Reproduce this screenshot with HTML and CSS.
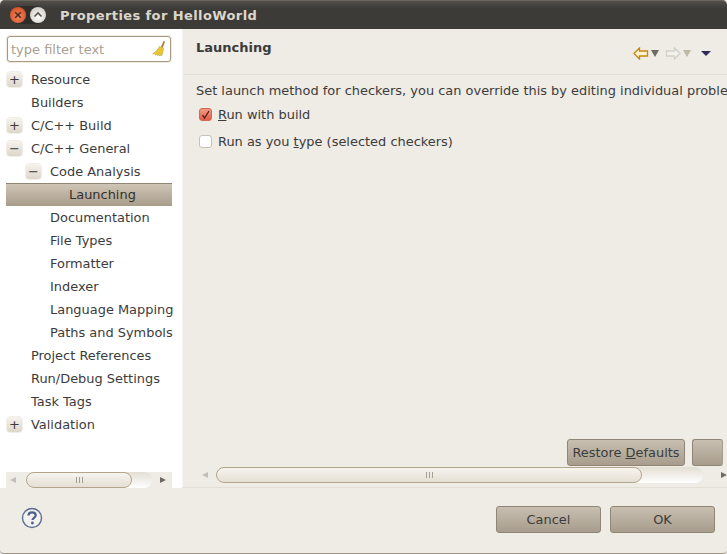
FILE: index.html
```html
<!DOCTYPE html>
<html lang="en">
<head>
<meta charset="utf-8">
<title>Properties for HelloWorld</title>
<link rel="stylesheet" href="styles.css">
</head>
<body>
<div class="window">
  <header class="titlebar">
    <div class="wm-group">
      <span class="wm wm-close"><svg width="16" height="16" viewBox="0 0 16 16"><path d="M5.200 5.200l5.600 5.600M10.800 5.200l-5.600 5.600" stroke="#4a2a20" stroke-width="1.600" fill="none"/></svg></span>
      <span class="wm wm-max"><svg width="16" height="16" viewBox="0 0 16 16"><path d="M4.500 9.500L8 6l3.500 3.500" stroke="#55514a" stroke-width="1.600" fill="none"/></svg></span>
    </div>
    <span class="title">Properties for HelloWorld</span>
  </header>
  <main class="main">
    <aside class="sidebar">
      <div class="filter">
        <span class="filter-text">type filter text</span>
        <svg class="broom" width="15" height="17" viewBox="0 0 15 17"><path d="M10 7l2.600-6 1.400.7-2.400 6.200z" fill="#a9762f"/><path d="M8.500 6.500l4 2-.5 2.500-1 4.500-1.500-.5-.5 1-1.500-1-.7.6-1.300-1-.8.4L3 13.600 1.500 14C4.500 12 7 9.500 8.500 6.500z" fill="#e8c832" stroke="#b8962a" stroke-width=".5"/></svg>
      </div>
      <ul class="tree">
        <li class="row"><span class="toggle">+</span><span>Resource</span></li>
        <li class="row"><span class="toggle none"></span><span>Builders</span></li>
        <li class="row"><span class="toggle">+</span><span>C/C++ Build</span></li>
        <li class="row"><span class="toggle">−</span><span>C/C++ General</span></li>
        <li class="row lvl1"><span class="toggle">−</span><span>Code Analysis</span></li>
        <li class="row lvl2 selected"><span class="toggle none"></span><span>Launching</span></li>
        <li class="row lvl1"><span class="toggle none"></span><span>Documentation</span></li>
        <li class="row lvl1"><span class="toggle none"></span><span>File Types</span></li>
        <li class="row lvl1"><span class="toggle none"></span><span>Formatter</span></li>
        <li class="row lvl1"><span class="toggle none"></span><span>Indexer</span></li>
        <li class="row lvl1"><span class="toggle none"></span><span>Language Mapping</span></li>
        <li class="row lvl1"><span class="toggle none"></span><span>Paths and Symbols</span></li>
        <li class="row"><span class="toggle none"></span><span>Project References</span></li>
        <li class="row"><span class="toggle none"></span><span>Run/Debug Settings</span></li>
        <li class="row"><span class="toggle none"></span><span>Task Tags</span></li>
        <li class="row"><span class="toggle">+</span><span>Validation</span></li>
      </ul>
      <div class="hscroll side-scroll">
        <span class="arrow arrow-left"></span>
        <div class="trough side-trough"><div class="thumb side-thumb"><span class="grip"></span></div></div>
        <span class="arrow arrow-right"></span>
      </div>
    </aside>
    <section class="content">
      <div class="page-head">
        <h1 class="page-title">Launching</h1>
        <div class="nav">
          <svg width="16" height="13" viewBox="0 0 16 13"><path d="M1 6.500L6.500 1v3h8v5h-8v3z" fill="#fdf3d0" stroke="#c8860e" stroke-width="1.300"/></svg>
          <span class="tri tri-grey"></span>
          <svg class="nav-fwd" width="16" height="13" viewBox="0 0 16 13"><path d="M15 6.500L9.500 1v3h-8v5h8v3z" fill="#f4f1ec" stroke="#d2cfc8" stroke-width="1.300"/></svg>
          <span class="tri tri-tan"></span>
          <span class="tri tri-navy"></span>
        </div>
      </div>
      <div class="page-body">
        <p class="desc">Set launch method for checkers, you can override this by editing individual problem settings</p>
        <label class="check check-first"><span class="box on"><svg width="13" height="13" viewBox="0 0 13 13"><path d="M3.500 7l2 3L10 3" stroke="#4a2018" stroke-width="1.300" fill="none"/></svg></span><span><u>R</u>un with build</span></label>
        <label class="check"><span class="box"></span><span>Run as you <u>t</u>ype (selected checkers)</span></label>
        <div class="page-actions">
          <button class="btn restore">Restore <u>D</u>efaults</button>
          <button class="btn apply"></button>
        </div>
      </div>
      <div class="hscroll main-scroll">
        <span class="arrow arrow-left"></span>
        <div class="trough main-trough"><div class="thumb main-thumb"><span class="grip"></span></div></div>
        <span class="arrow arrow-right"></span>
      </div>
    </section>
  </main>
  <footer class="footer">
    <svg class="help" width="22" height="22" viewBox="0 0 22 22"><circle cx="11" cy="11" r="9.500" fill="#f3f2f0" stroke="#5a6f94" stroke-width="1.400"/><path d="M7.500 8.500C7.500 6.300 9 5.300 11 5.300s3.700 1 3.700 3c0 2.500-3.200 2.500-3.200 4.700" fill="none" stroke="#4d628a" stroke-width="2.200"/><circle cx="11.400" cy="16" r="1.400" fill="#4d628a"/></svg>
    <div class="footer-actions">
      <button class="btn wide">Cancel</button>
      <button class="btn wide">OK</button>
    </div>
  </footer>
</div>
</body>
</html>
```
FILE: styles.css
```css
* { box-sizing: border-box; }
html, body { margin: 0; padding: 0; height: 100%; }
body {
  background: #efebe5;
  font-family: "DejaVu Sans", sans-serif;
  font-size: 12.95px;
  color: #3c3c3c;
  overflow: hidden;
}
.window {
  width: 727px;
  height: 554px;
  display: flex;
  flex-direction: column;
  overflow: hidden;
  background: #efebe5;
  border-bottom: 1px solid #9d9587;
  border-radius: 0 0 4px 4px;
}
.titlebar {
  height: 29px;
  flex: none;
  display: flex;
  align-items: center;
  gap: 14px;
  padding: 0 0 0 10px;
  background: linear-gradient(#55514b, #3c3b37 30%, #3c3b37);
  border-radius: 5px 5px 0 0;
  box-shadow: inset 0 1px 0 #6b6760;
}
.wm-group {
  display: flex;
  gap: 4px;
  padding: 1px 0;
  border-radius: 10px;
  background: #2f2e2b;
}
.wm {
  width: 16px;
  height: 16px;
  border-radius: 50%;
  display: block;
}
.wm svg { display: block; }
.wm-close { background: radial-gradient(circle at 50% 60%, #f08a5e, #d8522a 75%); }
.wm-max { background: radial-gradient(circle at 50% 60%, #fff, #cfcbc2 80%); }
.title {
  font-size: 13px;
  font-weight: bold;
  color: #dcd7cc;
  letter-spacing: 0.4px;
  margin-top: 1px;
}
.main {
  flex: 1;
  display: flex;
  min-height: 0;
}
.sidebar {
  width: 182px;
  flex: none;
  background: #fff;
  padding: 6px 10px 0 6px;
  display: flex;
  flex-direction: column;
}
.filter {
  height: 26px;
  display: flex;
  align-items: center;
  justify-content: space-between;
  padding: 0 4px 0 3px;
  background: #fff;
  border: 1px solid #a8997f;
  border-radius: 3px;
  box-shadow: 0 0 0 1px #efebe5;
  margin: 1px;
}
.filter-text { color: #a89f90; font-size: 13px; }
.broom { flex: none; margin-top: -2px; }
.tree {
  list-style: none;
  margin: 5px 0 0;
  padding: 0;
  flex: 1;
}
.row {
  height: 23px;
  display: flex;
  align-items: center;
  gap: 9px;
  margin-left: 1px;
  white-space: nowrap;
}
.row.lvl1 { padding-left: 19px; }
.row.lvl2 { padding-left: 38px; }
.selected {
  margin-left: 0;
  padding-left: 39px !important;
  padding-bottom: 1px;
  background: linear-gradient(#cfc5b6, #a89c8b);
  border-top: 1px solid #8f8574;
  color: #352f28;
}
.toggle {
  width: 15px;
  height: 15px;
  flex: none;
  display: flex;
  align-items: center;
  justify-content: center;
  font-size: 13px;
  line-height: 1;
  color: #3a3a3a;
  background: linear-gradient(#f6f3ee, #ddd6ca);
  border-radius: 3px;
  box-shadow: 0 0 0 .5px #e3ddd2;
}
.toggle.none { background: none; box-shadow: none; }
.hscroll {
  display: flex;
  align-items: center;
  flex: none;
}
.side-scroll {
  height: 16px;
  background: #efebe5;
  padding: 0 6px 0 4px;
  gap: 4px;
}
.arrow { width: 0; height: 0; flex: none; border-style: solid; border-color: transparent; }
.arrow-left { border-width: 3.500px 6px 3.500px 0; border-right-color: #c4bfb4; }
.arrow-right { border-width: 3.500px 0 3.500px 6px; border-left-color: #6f6a62; margin-left: auto; }
.trough {
  height: 16px;
  border-radius: 8px;
  background: linear-gradient(#e4ded3, #fff);
  flex: none;
}
.side-trough { width: 126px; margin-left: 6px; }
.thumb {
  height: 16px;
  border: 1px solid #b4a68c;
  border-radius: 8px;
  background: linear-gradient(#f7f4ef, #e5dfd4);
  display: flex;
  align-items: center;
  justify-content: center;
}
.side-thumb { width: 106px; }
.grip {
  width: 7px;
  height: 6px;
  background: repeating-linear-gradient(90deg, #a69e90 0 1px, transparent 1px 3px);
}
.content {
  flex: 1;
  min-width: 0;
  display: flex;
  flex-direction: column;
  border-left: 1px solid #f7f5f1;
  border-bottom: 1px solid #e3dfd6;
  overflow: hidden;
}
.page-head {
  height: 46px;
  flex: none;
  display: flex;
  justify-content: space-between;
  padding: 11px 16px 0 13px;
  border-bottom: 1px solid #e5e1d8;
}
.page-title {
  margin: 0;
  font-size: 13px;
  font-weight: bold;
  color: #3a3a3a;
}
.nav {
  display: flex;
  align-items: center;
  height: 16px;
  margin-top: 5px;
  gap: 2px;
}
.nav-fwd { margin-left: 4px; }
.tri {
  width: 0;
  height: 0;
  border-style: solid;
  border-width: 7px 4px 0;
  border-color: transparent;
}
.tri-grey { border-top-color: #6e6a64; }
.tri-tan { border-top-color: #c0b8a6; }
.tri-navy {
  border-width: 5px 5px 0;
  border-top-color: #2f2a5a;
  margin-left: 8px;
}
.page-body {
  flex: 1;
  display: flex;
  flex-direction: column;
  padding-left: 13px;
  white-space: nowrap;
  min-height: 0;
}
.desc { margin: 8px 0 0; line-height: 16px; }
.check {
  display: flex;
  align-items: center;
  gap: 6px;
  height: 16px;
  margin: 11px 0 0 3px;
}
.check-first { margin-top: 7px; }
.box {
  width: 13px;
  height: 13px;
  flex: none;
  background: #fff;
  border: 1px solid #c8c1b4;
  border-radius: 3px;
}
.box.on {
  background: linear-gradient(#f59a85, #e25c48);
  border-color: #d06a58;
}
.box svg { display: block; margin: -1px; }
.page-actions {
  margin-top: auto;
  display: flex;
  gap: 7px;
  padding-left: 371px;
}
.btn {
  height: 27px;
  font: inherit;
  color: #3c3c3c;
  padding: 0;
  background: linear-gradient(#c8bfb1, #a89d8c);
  border: 1px solid #8f8675;
  border-radius: 3px;
  flex: none;
}
.restore { width: 118px; }
.apply { width: 31px; border-right-color: #a89d8c; }
.main-scroll {
  height: 21px;
  padding: 0 0 4px 19px;
  gap: 8px;
}
.main-trough { width: 487px; margin-left: 0; }
.main-thumb { width: 426px; }
.footer {
  flex: none;
  height: 65px;
  display: flex;
  align-items: flex-start;
  justify-content: space-between;
  padding: 18px 12px 0 21px;
}
.help { margin-top: 1px; }
.footer-actions { display: flex; gap: 9px; }
.wide { width: 105px; }
```
